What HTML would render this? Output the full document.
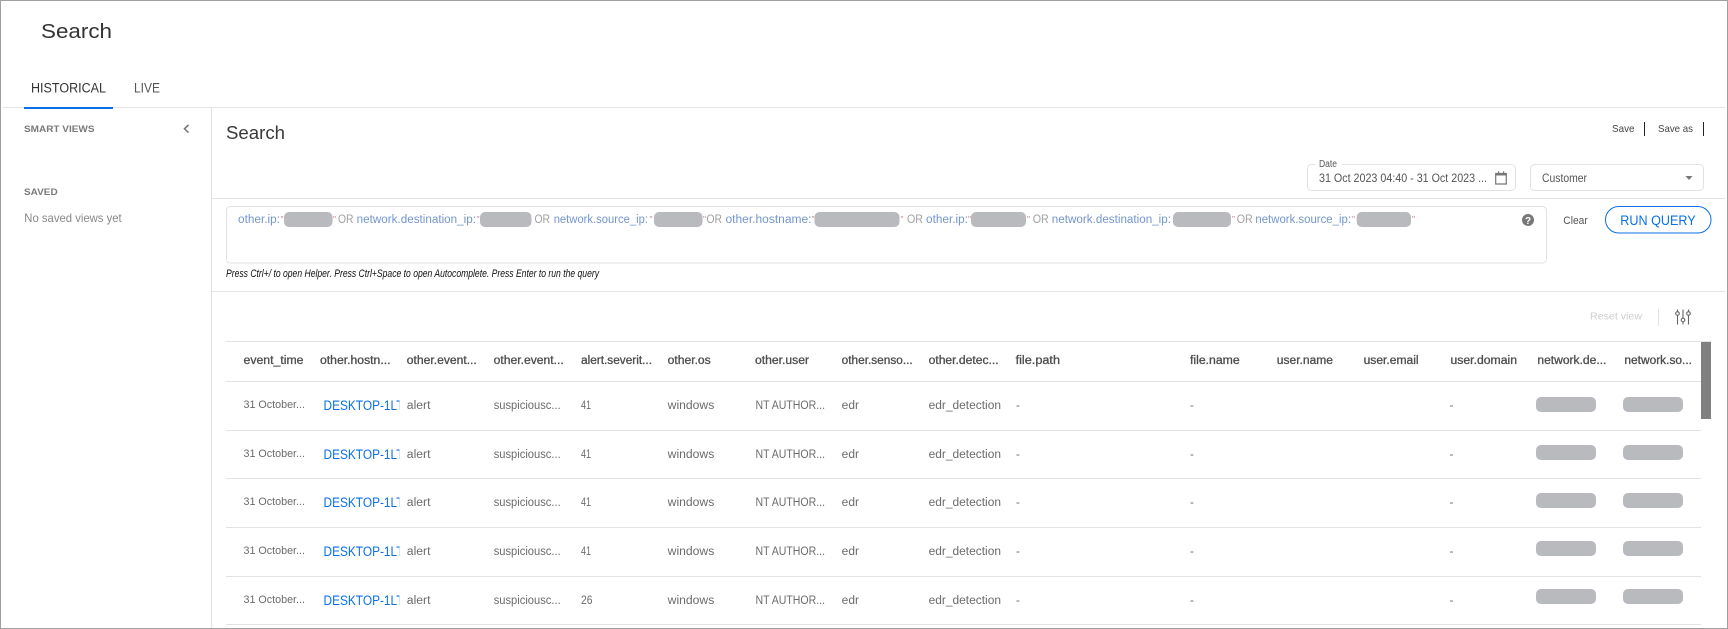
<!DOCTYPE html>
<html lang="en">
<head>
<meta charset="utf-8">
<title>Search</title>
<style>
html,body{margin:0;padding:0;background:#fff;width:1728px;height:629px;overflow:hidden}
svg{display:block}
text{font-family:"Liberation Sans",sans-serif;white-space:pre}
.h{font-size:11.5px;fill:#4d4d4d;stroke:#4d4d4d;stroke-width:.3px}
.c{font-size:11.5px;fill:#6b6b6b}
.t{font-size:11px;fill:#6b6b6b}
.d{font-size:13.5px;fill:#0a6fe8}
.q{font-size:11.5px;fill:#7396cb}
.o{font-size:11.5px;fill:#a0a0a0}
.r{font-size:8.5px;fill:#c08a8a}
.l{fill:#e2e2e2}
.p{fill:#b8babd}
</style>
</head>
<body>
<svg xmlns="http://www.w3.org/2000/svg" width="1728" height="629" viewBox="0 0 1728 629">
<defs><clipPath id="dc"><rect x="323" y="0" width="76.5" height="700"/></clipPath></defs>
<rect width="1728" height="629" fill="#fff"/>

<!-- page header -->
<text x="41" y="38" font-size="20.5" fill="#333" textLength="71" lengthAdjust="spacingAndGlyphs">Search</text>
<text x="31" y="92.5" font-size="13.5" fill="#333" textLength="75" lengthAdjust="spacingAndGlyphs">HISTORICAL</text>
<text x="134" y="92.5" font-size="13.5" fill="#555" textLength="26" lengthAdjust="spacingAndGlyphs">LIVE</text>

<!-- structure lines -->
<rect class="l" x="3" y="107" width="1722" height="1"/>
<rect x="24" y="107" width="89" height="2" fill="#0a6fe8"/>
<rect class="l" x="211" y="108" width="1" height="520"/>
<rect class="l" x="212" y="198" width="1513" height="1"/>
<rect class="l" x="212" y="291" width="1513" height="1"/>

<!-- sidebar -->
<text x="24" y="132" font-size="9.5" font-weight="bold" fill="#7a7a7a" textLength="70.5" lengthAdjust="spacingAndGlyphs">SMART VIEWS</text>
<path d="M188.5 125 L184.5 128.8 L188.5 132.6" fill="none" stroke="#777" stroke-width="1.6"/>
<text x="24" y="195" font-size="9.5" font-weight="bold" fill="#7a7a7a" textLength="33.7" lengthAdjust="spacingAndGlyphs">SAVED</text>
<text x="24.3" y="222" font-size="12" fill="#888" textLength="97.4" lengthAdjust="spacingAndGlyphs">No saved views yet</text>

<!-- main header -->
<text x="226" y="139" font-size="18" fill="#3a3a3a" textLength="59" lengthAdjust="spacingAndGlyphs">Search</text>
<text x="1612" y="132" font-size="10.5" fill="#444" textLength="22.5" lengthAdjust="spacingAndGlyphs">Save</text>
<rect x="1644" y="122" width="1" height="14" fill="#222"/>
<text x="1658" y="132" font-size="10.5" fill="#444" textLength="35" lengthAdjust="spacingAndGlyphs">Save as</text>
<rect x="1703" y="122" width="1" height="14" fill="#222"/>

<!-- date field -->
<rect x="1307.5" y="164.5" width="208" height="26" rx="4" fill="#fff" stroke="#e2e2e2"/>
<rect x="1315" y="163" width="27" height="3" fill="#fff"/>
<text x="1319" y="167" font-size="10" fill="#555" textLength="18" lengthAdjust="spacingAndGlyphs">Date</text>
<text x="1319" y="182" font-size="12" fill="#555" textLength="168" lengthAdjust="spacingAndGlyphs">31 Oct 2023 04:40 - 31 Oct 2023 ...</text>
<path d="M1495.7 173.5 H1506.3 V184 H1495.7 Z" fill="none" stroke="#777" stroke-width="1.2"/>
<rect x="1495.5" y="173" width="11" height="2.5" fill="#777"/>
<rect x="1498" y="171.3" width="1.2" height="2.5" fill="#777"/>
<rect x="1503" y="171.3" width="1.2" height="2.5" fill="#777"/>

<!-- customer select -->
<rect x="1530.5" y="164.5" width="173" height="26" rx="4" fill="#fff" stroke="#e2e2e2"/>
<text x="1542" y="182" font-size="12" fill="#555" textLength="45" lengthAdjust="spacingAndGlyphs">Customer</text>
<path d="M1685.5 176 H1692.5 L1689 180 Z" fill="#777"/>

<!-- query box -->
<rect x="226.5" y="206.5" width="1320" height="56.5" rx="4" fill="#fff" stroke="#e2e2e2"/>
<text class="q" x="238" y="223" textLength="42" lengthAdjust="spacingAndGlyphs">other.ip:</text>
<text class="r" x="280.5" y="222">"</text>
<rect class="p" x="284" y="212" width="48.5" height="15" rx="5"/>
<text class="r" x="333" y="222">"</text>
<text class="o" x="338" y="223" textLength="15.5" lengthAdjust="spacingAndGlyphs">OR</text>
<text class="q" x="356.6" y="223" textLength="119.4" lengthAdjust="spacingAndGlyphs">network.destination_ip:</text>
<text class="r" x="476.5" y="222">"</text>
<rect class="p" x="480" y="212" width="51.5" height="15" rx="5"/>
<text class="o" x="534.5" y="223" textLength="15.5" lengthAdjust="spacingAndGlyphs">OR</text>
<text class="q" x="553.7" y="223" textLength="94.3" lengthAdjust="spacingAndGlyphs">network.source_ip:</text>
<text class="r" x="649.5" y="222">"</text>
<rect class="p" x="654" y="212" width="48.5" height="15" rx="5"/>
<text class="r" x="703" y="222">"</text>
<text class="o" x="706.5" y="223" textLength="15.5" lengthAdjust="spacingAndGlyphs">OR</text>
<text class="q" x="725.5" y="223" textLength="86" lengthAdjust="spacingAndGlyphs">other.hostname:</text>
<text class="r" x="811.5" y="222">"</text>
<rect class="p" x="814.5" y="212" width="85" height="15" rx="5"/>
<text class="r" x="900.5" y="222">"</text>
<text class="o" x="907" y="223" textLength="16" lengthAdjust="spacingAndGlyphs">OR</text>
<text class="q" x="926" y="223" textLength="42" lengthAdjust="spacingAndGlyphs">other.ip:</text>
<text class="r" x="968" y="222">"</text>
<rect class="p" x="971" y="212" width="55" height="15" rx="5"/>
<text class="r" x="1027" y="222">"</text>
<text class="o" x="1032.7" y="223" textLength="16" lengthAdjust="spacingAndGlyphs">OR</text>
<text class="q" x="1051.8" y="223" textLength="119.2" lengthAdjust="spacingAndGlyphs">network.destination_ip:</text>
<rect class="p" x="1173" y="212" width="58" height="15" rx="5"/>
<text class="r" x="1232" y="222">"</text>
<text class="o" x="1236.7" y="223" textLength="16" lengthAdjust="spacingAndGlyphs">OR</text>
<text class="q" x="1255.4" y="223" textLength="95.6" lengthAdjust="spacingAndGlyphs">network.source_ip:</text>
<text class="r" x="1352" y="222">"</text>
<rect class="p" x="1356.7" y="212" width="54.3" height="15" rx="5"/>
<text class="r" x="1412" y="222">"</text>
<circle cx="1528" cy="220" r="6" fill="#777"/>
<text x="1528" y="224" font-size="10" font-weight="bold" fill="#fff" text-anchor="middle">?</text>
<text x="226" y="277" font-size="11" font-style="italic" fill="#111" textLength="373" lengthAdjust="spacingAndGlyphs">Press Ctrl+/ to open Helper. Press Ctrl+Space to open Autocomplete. Press Enter to run the query</text>

<!-- query actions -->
<text x="1563.3" y="224" font-size="11" fill="#555" textLength="24.5" lengthAdjust="spacingAndGlyphs">Clear</text>
<rect x="1605.5" y="206.5" width="105.5" height="26.5" rx="13.25" fill="#fff" stroke="#0a6fe8"/>
<text x="1620.3" y="225" font-size="13.5" fill="#0a6fe8" textLength="75.4" lengthAdjust="spacingAndGlyphs">RUN QUERY</text>

<!-- table tools -->
<text x="1590" y="319.3" font-size="10" fill="#cfcfcf" textLength="52" lengthAdjust="spacingAndGlyphs">Reset view</text>
<rect class="l" x="1658" y="309" width="1" height="17"/>
<g fill="none" stroke="#666" stroke-width="1.1">
<path d="M1677.5 309.5 V311.5 M1677.5 315.5 V324.5"/><circle cx="1677.5" cy="313.5" r="1.8"/>
<path d="M1683 309.5 V318 M1683 322 V324.5"/><circle cx="1683" cy="320" r="1.8"/>
<path d="M1688.5 309.5 V311.5 M1688.5 315.5 V324.5"/><circle cx="1688.5" cy="313.5" r="1.8"/>
</g>

<!-- table -->
<rect class="l" x="226" y="341" width="1485" height="1"/>
<rect class="l" x="226" y="381" width="1475" height="1"/>
<rect class="l" x="226" y="430" width="1475" height="1"/>
<rect class="l" x="226" y="478" width="1475" height="1"/>
<rect class="l" x="226" y="527" width="1475" height="1"/>
<rect class="l" x="226" y="576" width="1475" height="1"/>
<rect class="l" x="226" y="624" width="1475" height="1"/>
<rect x="1701" y="342" width="10" height="77" fill="#808080"/>

<text class="h" x="243.5" y="364" textLength="60" lengthAdjust="spacingAndGlyphs">event_time</text>
<text class="h" x="320" y="364" textLength="70.5" lengthAdjust="spacingAndGlyphs">other.hostn...</text>
<text class="h" x="406.8" y="364" textLength="70" lengthAdjust="spacingAndGlyphs">other.event...</text>
<text class="h" x="493.7" y="364" textLength="70" lengthAdjust="spacingAndGlyphs">other.event...</text>
<text class="h" x="581" y="364" textLength="71" lengthAdjust="spacingAndGlyphs">alert.severit...</text>
<text class="h" x="667.7" y="364" textLength="43" lengthAdjust="spacingAndGlyphs">other.os</text>
<text class="h" x="755" y="364" textLength="54" lengthAdjust="spacingAndGlyphs">other.user</text>
<text class="h" x="841.7" y="364" textLength="71" lengthAdjust="spacingAndGlyphs">other.senso...</text>
<text class="h" x="928.6" y="364" textLength="70" lengthAdjust="spacingAndGlyphs">other.detec...</text>
<text class="h" x="1015.6" y="364" textLength="44.4" lengthAdjust="spacingAndGlyphs">file.path</text>
<text class="h" x="1190" y="364" textLength="49.7" lengthAdjust="spacingAndGlyphs">file.name</text>
<text class="h" x="1276.8" y="364" textLength="56.2" lengthAdjust="spacingAndGlyphs">user.name</text>
<text class="h" x="1363.6" y="364" textLength="55" lengthAdjust="spacingAndGlyphs">user.email</text>
<text class="h" x="1450.5" y="364" textLength="66.5" lengthAdjust="spacingAndGlyphs">user.domain</text>
<text class="h" x="1537.4" y="364" textLength="69" lengthAdjust="spacingAndGlyphs">network.de...</text>
<text class="h" x="1624.4" y="364" textLength="67.6" lengthAdjust="spacingAndGlyphs">network.so...</text>

<!-- row 1 -->
<g>
<text class="t" x="243.5" y="408" textLength="61.5" lengthAdjust="spacingAndGlyphs">31 October...</text>
<text class="d" x="323.5" y="410" textLength="80" lengthAdjust="spacingAndGlyphs" clip-path="url(#dc)">DESKTOP-1LT</text>
<text class="c" x="406.8" y="409" textLength="23.7" lengthAdjust="spacingAndGlyphs">alert</text>
<text class="c" x="493.7" y="409" textLength="67" lengthAdjust="spacingAndGlyphs">suspiciousc...</text>
<text class="c" x="581" y="409" textLength="10" lengthAdjust="spacingAndGlyphs">41</text>
<text class="c" x="667.7" y="409" textLength="46.6" lengthAdjust="spacingAndGlyphs">windows</text>
<text class="c" x="755.5" y="409" textLength="69.5" lengthAdjust="spacingAndGlyphs">NT AUTHOR...</text>
<text class="c" x="841.7" y="409" textLength="17.3" lengthAdjust="spacingAndGlyphs">edr</text>
<text class="c" x="928.6" y="409" textLength="72.4" lengthAdjust="spacingAndGlyphs">edr_detection</text>
<text class="c" x="1016" y="409">-</text>
<text class="c" x="1190" y="409">-</text>
<text class="c" x="1449.5" y="409">-</text>
</g>
<rect class="p" x="1536" y="397" width="60" height="15" rx="5"/>
<rect class="p" x="1623" y="397" width="60" height="15" rx="5"/>

<!-- row 2 -->
<g transform="translate(0,49)">
<text class="t" x="243.5" y="408" textLength="61.5" lengthAdjust="spacingAndGlyphs">31 October...</text>
<text class="d" x="323.5" y="410" textLength="80" lengthAdjust="spacingAndGlyphs" clip-path="url(#dc)">DESKTOP-1LT</text>
<text class="c" x="406.8" y="409" textLength="23.7" lengthAdjust="spacingAndGlyphs">alert</text>
<text class="c" x="493.7" y="409" textLength="67" lengthAdjust="spacingAndGlyphs">suspiciousc...</text>
<text class="c" x="581" y="409" textLength="10" lengthAdjust="spacingAndGlyphs">41</text>
<text class="c" x="667.7" y="409" textLength="46.6" lengthAdjust="spacingAndGlyphs">windows</text>
<text class="c" x="755.5" y="409" textLength="69.5" lengthAdjust="spacingAndGlyphs">NT AUTHOR...</text>
<text class="c" x="841.7" y="409" textLength="17.3" lengthAdjust="spacingAndGlyphs">edr</text>
<text class="c" x="928.6" y="409" textLength="72.4" lengthAdjust="spacingAndGlyphs">edr_detection</text>
<text class="c" x="1016" y="409">-</text>
<text class="c" x="1190" y="409">-</text>
<text class="c" x="1449.5" y="409">-</text>
</g>
<rect class="p" x="1536" y="445" width="60" height="15" rx="5"/>
<rect class="p" x="1623" y="445" width="60" height="15" rx="5"/>

<!-- row 3 -->
<g transform="translate(0,97)">
<text class="t" x="243.5" y="408" textLength="61.5" lengthAdjust="spacingAndGlyphs">31 October...</text>
<text class="d" x="323.5" y="410" textLength="80" lengthAdjust="spacingAndGlyphs" clip-path="url(#dc)">DESKTOP-1LT</text>
<text class="c" x="406.8" y="409" textLength="23.7" lengthAdjust="spacingAndGlyphs">alert</text>
<text class="c" x="493.7" y="409" textLength="67" lengthAdjust="spacingAndGlyphs">suspiciousc...</text>
<text class="c" x="581" y="409" textLength="10" lengthAdjust="spacingAndGlyphs">41</text>
<text class="c" x="667.7" y="409" textLength="46.6" lengthAdjust="spacingAndGlyphs">windows</text>
<text class="c" x="755.5" y="409" textLength="69.5" lengthAdjust="spacingAndGlyphs">NT AUTHOR...</text>
<text class="c" x="841.7" y="409" textLength="17.3" lengthAdjust="spacingAndGlyphs">edr</text>
<text class="c" x="928.6" y="409" textLength="72.4" lengthAdjust="spacingAndGlyphs">edr_detection</text>
<text class="c" x="1016" y="409">-</text>
<text class="c" x="1190" y="409">-</text>
<text class="c" x="1449.5" y="409">-</text>
</g>
<rect class="p" x="1536" y="493" width="60" height="15" rx="5"/>
<rect class="p" x="1623" y="493" width="60" height="15" rx="5"/>

<!-- row 4 -->
<g transform="translate(0,146)">
<text class="t" x="243.5" y="408" textLength="61.5" lengthAdjust="spacingAndGlyphs">31 October...</text>
<text class="d" x="323.5" y="410" textLength="80" lengthAdjust="spacingAndGlyphs" clip-path="url(#dc)">DESKTOP-1LT</text>
<text class="c" x="406.8" y="409" textLength="23.7" lengthAdjust="spacingAndGlyphs">alert</text>
<text class="c" x="493.7" y="409" textLength="67" lengthAdjust="spacingAndGlyphs">suspiciousc...</text>
<text class="c" x="581" y="409" textLength="10" lengthAdjust="spacingAndGlyphs">41</text>
<text class="c" x="667.7" y="409" textLength="46.6" lengthAdjust="spacingAndGlyphs">windows</text>
<text class="c" x="755.5" y="409" textLength="69.5" lengthAdjust="spacingAndGlyphs">NT AUTHOR...</text>
<text class="c" x="841.7" y="409" textLength="17.3" lengthAdjust="spacingAndGlyphs">edr</text>
<text class="c" x="928.6" y="409" textLength="72.4" lengthAdjust="spacingAndGlyphs">edr_detection</text>
<text class="c" x="1016" y="409">-</text>
<text class="c" x="1190" y="409">-</text>
<text class="c" x="1449.5" y="409">-</text>
</g>
<rect class="p" x="1536" y="541" width="60" height="15" rx="5"/>
<rect class="p" x="1623" y="541" width="60" height="15" rx="5"/>

<!-- row 5 -->
<g transform="translate(0,195)">
<text class="t" x="243.5" y="408" textLength="61.5" lengthAdjust="spacingAndGlyphs">31 October...</text>
<text class="d" x="323.5" y="410" textLength="80" lengthAdjust="spacingAndGlyphs" clip-path="url(#dc)">DESKTOP-1LT</text>
<text class="c" x="406.8" y="409" textLength="23.7" lengthAdjust="spacingAndGlyphs">alert</text>
<text class="c" x="493.7" y="409" textLength="67" lengthAdjust="spacingAndGlyphs">suspiciousc...</text>
<text class="c" x="581" y="409" textLength="11.5" lengthAdjust="spacingAndGlyphs">26</text>
<text class="c" x="667.7" y="409" textLength="46.6" lengthAdjust="spacingAndGlyphs">windows</text>
<text class="c" x="755.5" y="409" textLength="69.5" lengthAdjust="spacingAndGlyphs">NT AUTHOR...</text>
<text class="c" x="841.7" y="409" textLength="17.3" lengthAdjust="spacingAndGlyphs">edr</text>
<text class="c" x="928.6" y="409" textLength="72.4" lengthAdjust="spacingAndGlyphs">edr_detection</text>
<text class="c" x="1016" y="409">-</text>
<text class="c" x="1190" y="409">-</text>
<text class="c" x="1449.5" y="409">-</text>
</g>
<rect class="p" x="1536" y="589" width="60" height="15" rx="5"/>
<rect class="p" x="1623" y="589" width="60" height="15" rx="5"/>

<!-- outer frame -->
<rect x="0.5" y="0.5" width="1727" height="628" fill="none" stroke="#a0a0a0"/>
</svg>
</body>
</html>
